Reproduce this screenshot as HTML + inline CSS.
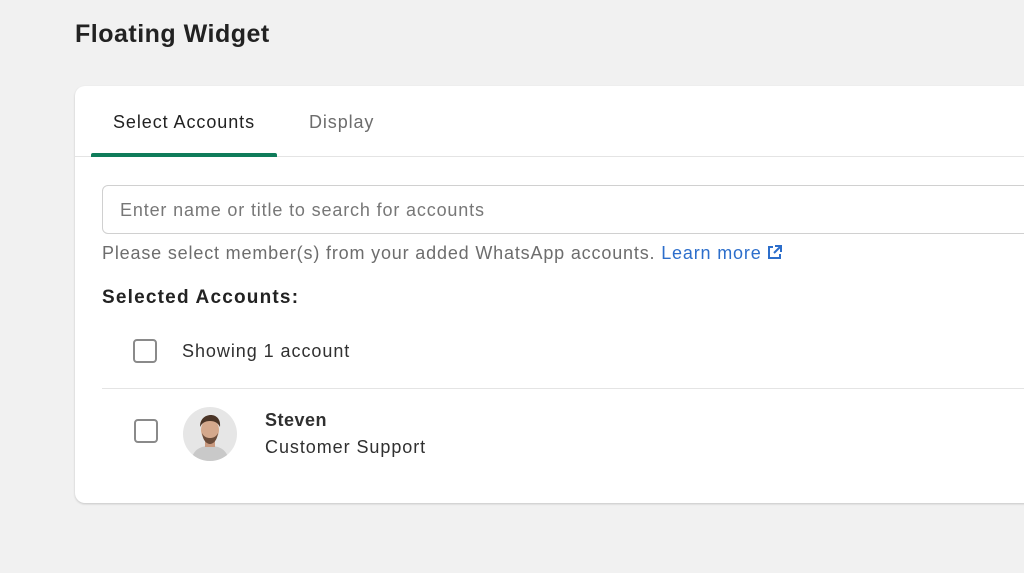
<!DOCTYPE html><html><head><style>
body{margin:0;width:1024px;height:573px;background:#f1f1f1;font-family:"Liberation Sans",sans-serif;overflow:hidden;position:relative;color:#303030}
.a{position:absolute;white-space:nowrap}
.card{position:absolute;left:75px;top:86px;width:980px;height:417px;background:#fff;border-radius:10px;box-shadow:0 1px 2px rgba(0,0,0,.18)}
.cb{position:absolute;width:20px;height:20px;border:2px solid #8a8a8a;border-radius:4px}
</style></head><body>
<div class="a" style="left:75px;top:20px;font-size:25px;font-weight:bold;color:#222;letter-spacing:0.5px">Floating Widget</div>
<div class="card"></div>
<div class="a" style="left:113px;top:112px;font-size:18px;color:#222;letter-spacing:0.93px">Select Accounts</div>
<div class="a" style="left:309px;top:112px;font-size:18px;color:#6d6d6d;letter-spacing:0.9px">Display</div>
<div class="a" style="left:75px;top:156px;width:949px;height:1px;background:#e4e4e4"></div>
<div class="a" style="left:91px;top:153px;width:186px;height:4px;background:#0f7c5a;border-radius:2px 2px 0 0"></div>
<div class="a" style="left:102px;top:185px;width:940px;height:47px;border:1px solid #d0d0d0;border-radius:6px"></div>
<div class="a" style="left:120px;top:200px;font-size:18px;color:#777;letter-spacing:0.85px">Enter name or title to search for accounts</div>
<div class="a" style="left:102px;top:243px;font-size:18px;color:#6d6d6d;letter-spacing:0.83px">Please select member(s) from your added WhatsApp accounts. <span style="color:#2c6ecb">Learn more</span> <svg width="15" height="15" viewBox="0 0 15 15" style="vertical-align:-1px"><path d="M6 2H2v11h11V9" fill="none" stroke="#2c6ecb" stroke-width="2"/><path d="M8 1h6v6M14 1L7 8" fill="none" stroke="#2c6ecb" stroke-width="2"/></svg></div>
<div class="a" style="left:102px;top:287px;font-size:19px;font-weight:bold;color:#222;letter-spacing:1.2px">Selected Accounts:</div>
<div class="cb" style="left:133px;top:339px"></div>
<div class="a" style="left:182px;top:341px;font-size:18px;color:#303030;letter-spacing:0.95px">Showing 1 account</div>
<div class="a" style="left:102px;top:388px;width:922px;height:1px;background:#e4e4e4"></div>
<div class="cb" style="left:134px;top:419px"></div>
<svg class="a" style="left:183px;top:407px" width="54" height="54" viewBox="0 0 54 54"><defs><clipPath id="c"><circle cx="27" cy="27" r="27"/></clipPath></defs><g clip-path="url(#c)"><rect width="54" height="54" fill="#e6e6e6"/><path d="M8 54c2-12 10-15 19-15s17 3 19 15z" fill="#c9c9c9"/><rect x="22" y="30" width="10" height="10" fill="#c99a80"/><ellipse cx="27" cy="23" rx="9" ry="11" fill="#d4a88c"/><path d="M19 26c1 8 5 11 8 11s7-3 8-11c-2 4-5 5-8 5s-6-1-8-5z" fill="#6b4c3a"/><path d="M17 20c0-9 6-12 11-12s10 4 9 12c-2-4-5-6-10-6s-8 2-10 6z" fill="#4a3426"/></g></svg>
<div class="a" style="left:265px;top:410px;font-size:18px;font-weight:bold;color:#303030;letter-spacing:0.5px">Steven</div>
<div class="a" style="left:265px;top:437px;font-size:18px;color:#303030;letter-spacing:0.94px">Customer Support</div>
</body></html>
